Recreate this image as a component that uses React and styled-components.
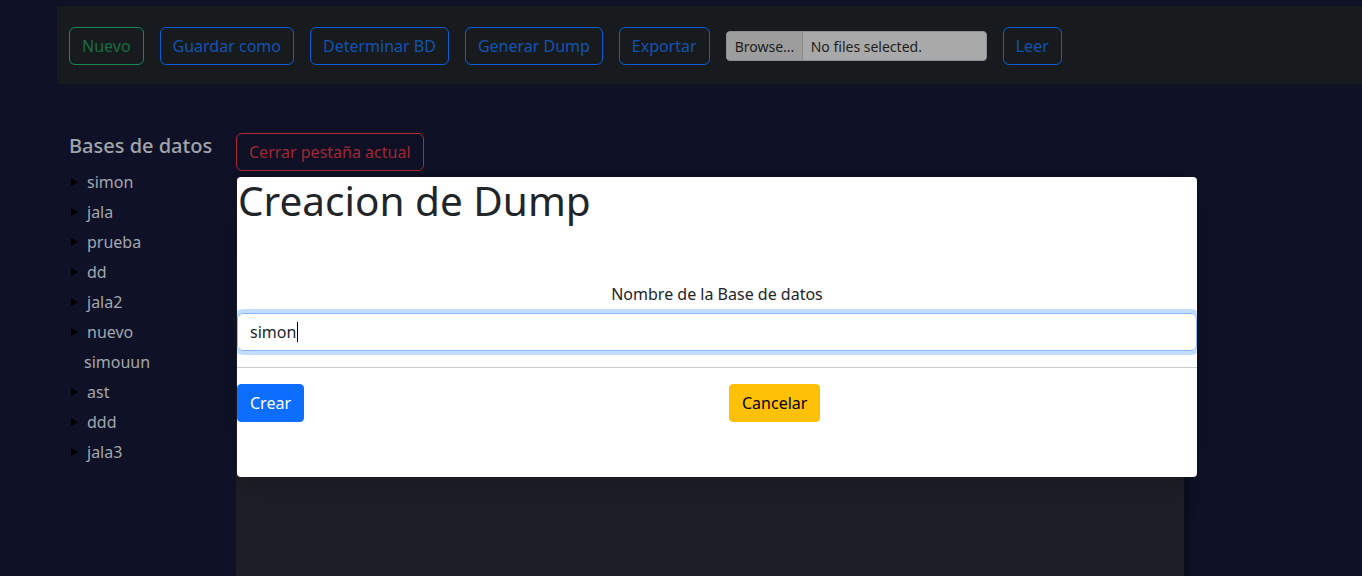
import React from 'react'
import styled, { createGlobalStyle, css } from 'styled-components'

const GlobalStyle = createGlobalStyle`
   html, body {
      margin: 0;
      padding: 0;
      background: #0f1227;
      font-family: 'Noto Sans', 'Open Sans', sans-serif;
      overflow: hidden;
   }
`

const Page = styled.div`
   width: 1362px;
   height: 576px;
   padding-top: 6px;
   box-sizing: border-box;
`

const Toolbar = styled.header`
   margin-left: 57px;
   height: 78px;
   box-sizing: border-box;
   padding: 2px 12px 0;
   background: #181b1e;
   display: flex;
   align-items: center;
   gap: 16px;
`

const tones = {
   success: { border: '#198754', text: '#1a6b41' },
   primary: { border: '#0b5ed7', text: '#1452b0' },
   danger: { border: '#b02a37', text: '#a52834' },
}

const OutlineButton = styled.button`
   font-family: inherit;
   font-size: 16px;
   line-height: 24px;
   padding: 6px 12px;
   border-radius: 6px;
   background: transparent;
   border: 1px solid ${p => tones[p.$tone].border};
   color: ${p => tones[p.$tone].text};
   white-space: nowrap;
`

const FilePicker = styled.div`
   display: flex;
   width: 261px;
   height: 30px;
   border-radius: 4px;
   overflow: hidden;
   background: #a9a9a9;
   border: 1px solid #8f8f8f;
   box-sizing: border-box;
   font-size: 14px;
   color: #1e1e1e;
`

const BrowseLabel = styled.span`
   display: flex;
   align-items: center;
   padding: 0 8px;
   width: 59px;
   background: #9d9d9d;
   border-right: 1px solid #8a8a8a;
`

const FileName = styled.span`
   display: flex;
   align-items: center;
   padding: 0 8px;
`

const Body = styled.div`
   display: grid;
   grid-template-columns: 167px 960px;
   margin: 49px 0 0 57px;
`

const Sidebar = styled.aside`
   padding: 0 12px;
   color: #a3a7ae;
   white-space: nowrap;
`

const SideTitle = styled.h4`
   margin: 1px 0 9px;
   font-size: 20px;
   line-height: 24px;
   font-weight: 500;
   color: #a0a4ab;
`

const DbList = styled.ul`
   list-style: none;
   margin: 0;
   padding: 0;
`

const DbItem = styled.li`
   display: flex;
   align-items: center;
   height: 30px;
   font-size: 16px;
   padding-left: ${p => (p.$leaf ? '15px' : '2px')};
   ${p =>
      !p.$leaf &&
      css`
         &::before {
            content: '';
            width: 0;
            height: 0;
            border-top: 4px solid transparent;
            border-bottom: 4px solid transparent;
            border-left: 7px solid #000;
            margin-right: 9px;
         }
      `}
`

const Main = styled.main`
   position: relative;
   padding: 0 12px;
   display: flex;
   flex-direction: column;
   align-items: flex-start;
   gap: 7px;
`

const TabPanel = styled.section`
   align-self: stretch;
   width: 948px;
   height: 400px;
   background: linear-gradient(#15161a, #1c1d23 40%, #1e1e27);
   box-shadow: 6px 0 4px rgba(0, 0, 0, 0.25);
`

const Modal = styled.div`
   position: absolute;
   top: 44px;
   left: 13px;
   width: 960px;
   height: 300px;
   background: #fff;
   border-radius: 4px;
   color: #212529;
   box-shadow: 0 0 40px rgba(0, 0, 0, 0.2);
`

const ModalTitle = styled.h1`
   margin: 0;
   font-size: 40.5px;
   line-height: 48px;
   font-weight: 400;
   padding-left: 1px;
`

const FieldLabel = styled.label`
   display: block;
   margin-top: 57px;
   text-align: center;
   font-size: 16px;
   line-height: 24px;
`

const FieldClip = styled.div`
   margin-top: 3px;
   padding: 4px 0;
   overflow: hidden;
`

const TextField = styled.div`
   height: 38px;
   box-sizing: border-box;
   border: 1px solid #86b7fe;
   border-radius: 6px;
   box-shadow: 0 0 0 4px rgba(13, 110, 253, 0.25);
   display: flex;
   align-items: center;
   padding: 0 12px;
   font-size: 16px;
`

const Caret = styled.span`
   display: inline-block;
   width: 1px;
   height: 20px;
   background: #000;
   margin-left: 1px;
`

const Divider = styled.hr`
   margin: 12px 0 16px;
   border: 0;
   border-top: 1px solid #cbcbcb;
`

const Actions = styled.div`
   display: grid;
   grid-template-columns: 1fr 1fr;
   align-items: start;
`

const SolidButton = styled.button`
   justify-self: start;
   font-family: inherit;
   font-size: 16px;
   line-height: 24px;
   padding: 6px 12px;
   border: 1px solid ${p => p.$bg};
   border-radius: 4px;
   background: ${p => p.$bg};
   color: ${p => p.$fg};
   margin-left: ${p => p.$offset || 0}px;
`

const toolbarButtons = [
   ['Guardar como', 'primary'],
   ['Determinar BD', 'primary'],
   ['Generar Dump', 'primary'],
   ['Exportar', 'primary'],
]

const bases = [
   'simon',
   'jala',
   'prueba',
   'dd',
   'jala2',
   'nuevo',
   { name: 'simouun', leaf: true },
   'ast',
   'ddd',
   'jala3',
]

const App = () => {
   return (
      <Page>
         <GlobalStyle />
         <Toolbar>
            <OutlineButton $tone="success">Nuevo</OutlineButton>
            {toolbarButtons.map(([label, tone]) => (
               <OutlineButton key={label} $tone={tone}>
                  {label}
               </OutlineButton>
            ))}
            <FilePicker>
               <BrowseLabel>Browse...</BrowseLabel>
               <FileName>No files selected.</FileName>
            </FilePicker>
            <OutlineButton $tone="primary">Leer</OutlineButton>
         </Toolbar>

         <Body>
            <Sidebar>
               <SideTitle>Bases de datos</SideTitle>
               <DbList>
                  {bases.map(b =>
                     typeof b === 'string' ? (
                        <DbItem key={b}>{b}</DbItem>
                     ) : (
                        <DbItem key={b.name} $leaf>
                           {b.name}
                        </DbItem>
                     )
                  )}
               </DbList>
            </Sidebar>

            <Main>
               <OutlineButton $tone="danger">Cerrar pestaña actual</OutlineButton>
               <TabPanel />
               <Modal>
                  <ModalTitle>Creacion de Dump</ModalTitle>
                  <FieldLabel>Nombre de la Base de datos</FieldLabel>
                  <FieldClip>
                     <TextField>
                        simon
                        <Caret />
                     </TextField>
                  </FieldClip>
                  <Divider />
                  <Actions>
                     <SolidButton $bg="#0d6efd" $fg="#fff">
                        Crear
                     </SolidButton>
                     <SolidButton $bg="#ffc107" $fg="#000" $offset={12}>
                        Cancelar
                     </SolidButton>
                  </Actions>
               </Modal>
            </Main>
         </Body>
      </Page>
   )
}

export default App
